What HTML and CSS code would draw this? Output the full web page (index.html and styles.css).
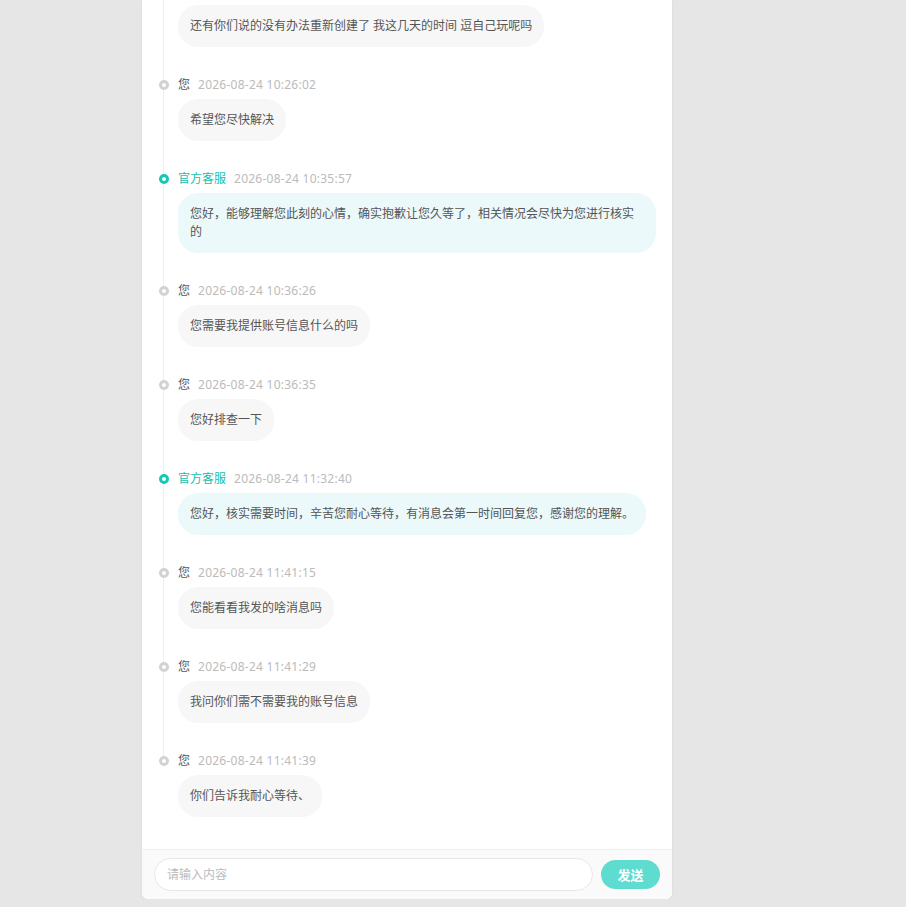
FILE: index.html
```html
<!DOCTYPE html>
<html lang="zh-CN">
<head>
    <meta charset="UTF-8">
    <meta name="viewport" content="width=device-width, initial-scale=1.0">
    <title>工单对话</title>
    <link rel="stylesheet" href="styles.css">
</head>
<body>
    <div class="chat-panel">
        <div class="msg-list">
            <div class="msg">
                <div class="msg-head"><span class="dot"></span><span class="who">您</span><span class="time">2026-08-24 10:25:48</span></div>
                <div class="bubble">还有你们说的没有办法重新创建了 我这几天的时间 逗自己玩呢吗</div>
            </div>
            <div class="msg">
                <div class="msg-head"><span class="dot"></span><span class="who">您</span><span class="time">2026-08-24 10:26:02</span></div>
                <div class="bubble">希望您尽快解决</div>
            </div>
            <div class="msg staff">
                <div class="msg-head"><span class="dot"></span><span class="who">官方客服</span><span class="time">2026-08-24 10:35:57</span></div>
                <div class="bubble">您好，能够理解您此刻的心情，确实抱歉让您久等了，相关情况会尽快为您进行核实的</div>
            </div>
            <div class="msg">
                <div class="msg-head"><span class="dot"></span><span class="who">您</span><span class="time">2026-08-24 10:36:26</span></div>
                <div class="bubble">您需要我提供账号信息什么的吗</div>
            </div>
            <div class="msg">
                <div class="msg-head"><span class="dot"></span><span class="who">您</span><span class="time">2026-08-24 10:36:35</span></div>
                <div class="bubble">您好排查一下</div>
            </div>
            <div class="msg staff">
                <div class="msg-head"><span class="dot"></span><span class="who">官方客服</span><span class="time">2026-08-24 11:32:40</span></div>
                <div class="bubble">您好，核实需要时间，辛苦您耐心等待，有消息会第一时间回复您，感谢您的理解。</div>
            </div>
            <div class="msg">
                <div class="msg-head"><span class="dot"></span><span class="who">您</span><span class="time">2026-08-24 11:41:15</span></div>
                <div class="bubble">您能看看我发的啥消息吗</div>
            </div>
            <div class="msg">
                <div class="msg-head"><span class="dot"></span><span class="who">您</span><span class="time">2026-08-24 11:41:29</span></div>
                <div class="bubble">我问你们需不需要我的账号信息</div>
            </div>
            <div class="msg">
                <div class="msg-head"><span class="dot"></span><span class="who">您</span><span class="time">2026-08-24 11:41:39</span></div>
                <div class="bubble">你们告诉我耐心等待、</div>
            </div>
        </div>
        <div class="reply-bar">
            <input class="reply-input" type="text" placeholder="请输入内容">
            <button class="send-btn">发送</button>
        </div>
    </div>
</body>
</html>
```

FILE: styles.css
```css
body {
    margin: 0;
    font-family: "Noto Sans", "Noto Sans CJK SC", sans-serif;
    background-color: #e6e6e6;
    color: #555;
}
.chat-panel {
    margin-left: 142px;
    width: 530px;
    height: calc(100vh - 8px);
    background: #fff;
    border-radius: 0 0 6px 6px;
    box-shadow: 0 1px 3px rgba(0, 0, 0, 0.06);
    display: flex;
    flex-direction: column;
    overflow: hidden;
}
/* новые сообщения прижаты к низу, старые уходят вверх */
.msg-list {
    flex: 1;
    overflow: hidden;
    display: flex;
    flex-direction: column;
    justify-content: flex-end;
    padding: 0 16px 2px 36px;
}
.msg {
    position: relative;
    flex-shrink: 0;
    display: flex;
    flex-direction: column;
    align-items: flex-start;
    padding-bottom: 30px;
}
/* линия таймлайна до следующего сообщения */
.msg::before {
    content: '';
    position: absolute;
    left: -15px;
    top: 7px;
    bottom: -7px;
    width: 1px;
    background: #eee;
}
.msg:last-child::before {
    display: none;
}
.msg-head {
    position: relative;
    display: flex;
    align-items: center;
    font-size: 12px;
    line-height: 15px;
    height: 15px;
}
.dot {
    position: absolute;
    left: -19px;
    top: 3px;
    width: 10px;
    height: 10px;
    box-sizing: border-box;
    border-radius: 50%;
    border: 3px solid #d2d2d2;
    background: #fff;
}
.who {
    color: #555;
}
.time {
    margin-left: 8px;
    color: #bbb;
    letter-spacing: 0.25px;
}
.bubble {
    margin-top: 7px;
    max-width: 100%;
    box-sizing: border-box;
    padding: 12px 12px;
    font-size: 12px;
    line-height: 18px;
    background: #f7f7f7;
    border-radius: 20px;
    color: #555;
}
.staff .dot {
    border-color: #14c8b6;
}
.staff .who {
    color: #14c0ae;
}
.staff .bubble {
    background: #ebf9fa;
}
.reply-bar {
    flex-shrink: 0;
    height: 49px;
    border-top: 1px solid #f0f0f0;
    background: #fafafa;
    display: flex;
    align-items: center;
    gap: 8px;
    padding: 0 12px;
}
.reply-input {
    flex: 1;
    height: 33px;
    box-sizing: border-box;
    border: 1px solid #e6e6e6;
    border-radius: 17px;
    padding: 0 12px;
    font-family: inherit;
    font-size: 12px;
    background: #fff;
    outline: none;
}
.reply-input::placeholder {
    color: #bbb;
}
.send-btn {
    width: 59px;
    height: 29px;
    border: none;
    border-radius: 15px;
    background: #5edcd0;
    color: #fff;
    font-family: inherit;
    font-size: 13px;
    font-weight: bold;
    cursor: pointer;
}
```
